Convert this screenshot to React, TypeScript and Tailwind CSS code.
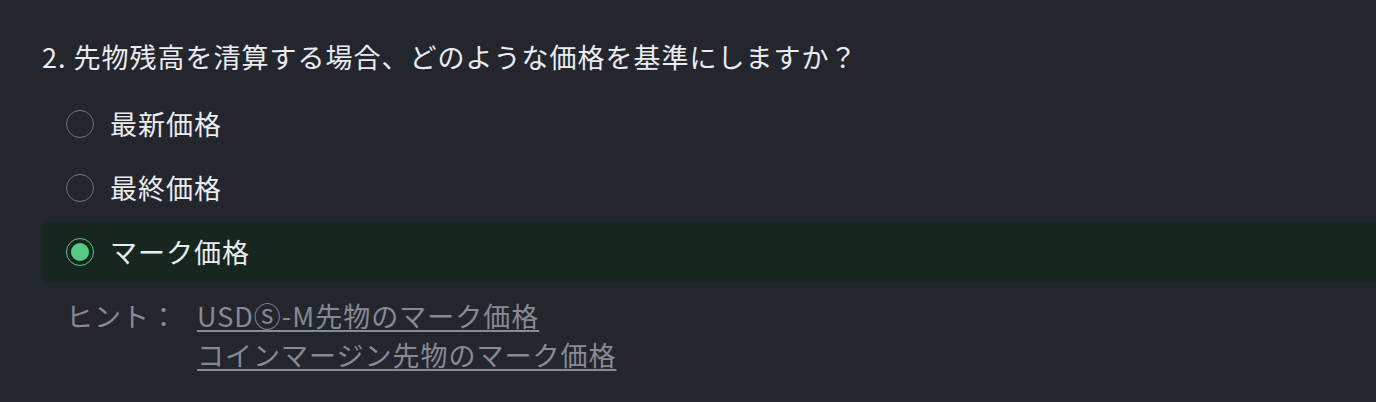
import React, { useState } from 'react';

const options = ['最新価格', '最終価格', 'マーク価格'];

const Radio: React.FC<{ checked: boolean }> = ({ checked }) => (
  <span
    className={`flex h-[28px] w-[28px] shrink-0 items-center justify-center rounded-full border-[1.5px] ${
      checked ? 'border-[#58c885]' : 'border-[#70737b]'
    }`}
  >
    {checked && <span className="h-[18px] w-[18px] rounded-full bg-[#58c885]"></span>}
  </span>
);

const App: React.FC = () => {
  const [selected, setSelected] = useState(2);

  return (
    <div
      className="min-h-[402px] w-full overflow-hidden bg-[#24262d] pt-[39px] pl-[42px] text-[#eaecef]"
      style={{ fontFamily: '"Noto Sans CJK JP", "Noto Sans", sans-serif' }}
    >
      <h2 className="text-[27px] leading-9 tracking-[1px]">2. 先物残高を清算する場合、どのような価格を基準にしますか？</h2>

      <div className="-mr-4 mt-[18px] flex flex-col gap-[2px]">
        {options.map((opt, i) => (
          <label
            key={opt}
            onClick={() => setSelected(i)}
            className={`flex h-[62px] cursor-pointer items-center gap-4 rounded-lg pl-6 ${
              selected === i ? 'bg-[#17261f]' : ''
            }`}
          >
            <Radio checked={selected === i} />
            <span className="text-[27px] tracking-[1px]">{opt}</span>
          </label>
        ))}
      </div>

      {/* Hint */}
      <div className="mt-[13px] flex pl-6 text-[27px] leading-[39px] tracking-[1px] text-[#868a95]">
        <span className="w-[131px] shrink-0">ヒント：</span>
        <div className="flex flex-col">
          <a className="underline decoration-[1.5px] underline-offset-[3px]">USDⓈ-M先物のマーク価格</a>
          <a className="underline decoration-[1.5px] underline-offset-[3px]">コインマージン先物のマーク価格</a>
        </div>
      </div>
    </div>
  );
};

export default App;
